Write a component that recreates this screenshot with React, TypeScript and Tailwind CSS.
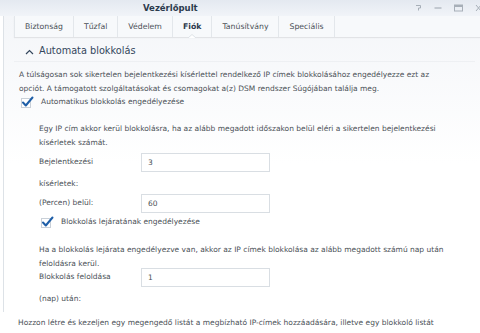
import React from 'react'

const tabs = ['Biztonság', 'Tűzfal', 'Védelem', 'Fiók', 'Tanúsítvány', 'Speciális']

function Check() {
  return (
    <svg width="13" height="12" viewBox="0 0 13 12" className="shrink-0">
      <rect x="0.5" y="2.5" width="9" height="9" fill="#fff" stroke="#c9d0d8" />
      <path d="M2 6.5 L4.8 9.5 L11.5 1.5" fill="none" stroke="#1f5fa8" strokeWidth="2" strokeLinecap="round" strokeLinejoin="round" />
    </svg>
  )
}

function Field({ lines, value }: { lines: string[]; value: string }) {
  return (
    <div className="flex">
      <div className="w-[102px] leading-[22px]">
        {lines.map((l) => (
          <div key={l}>{l}</div>
        ))}
      </div>
      <div className="w-[129px] h-[19px] mt-[2px] border border-[#d9dee3] bg-white flex items-center pl-[6px] text-[#4a4f55]">
        {value}
      </div>
    </div>
  )
}

export default function App() {
  return (
    <div
      className="w-[480px] h-[333px] overflow-hidden bg-white text-[7.5px] text-[#4b5157]"
      style={{ fontFamily: '"DejaVu Sans", Verdana, sans-serif' }}
    >
      {/* Title bar */}
      <div className="h-[16px] flex items-center bg-gradient-to-b from-[#e4e9f0] to-[#f1f4f8]">
        <div className="pl-[143px] font-bold text-[8.5px] text-[#2b3a4d]">Vezérlőpult</div>
        <div className="ml-auto flex items-center gap-[12px] text-[#9aa3ad]">
          <svg width="7" height="8" viewBox="0 0 7 8">
            <path d="M1 1.5 H5.5 V4 H3.5 V6.5" fill="none" stroke="#a7afb8" strokeWidth="1" />
          </svg>
          <svg width="8" height="8" viewBox="0 0 8 8">
            <path d="M0.5 4 H7.5" stroke="#a7afb8" strokeWidth="1.2" />
          </svg>
          <svg width="9" height="8" viewBox="0 0 9 8">
            <rect x="0.5" y="1" width="8" height="6" fill="none" stroke="#a7afb8" />
            <rect x="0.5" y="1" width="8" height="2" fill="#a7afb8" />
          </svg>
          <svg width="6" height="8" viewBox="0 0 6 8" className="-mr-[1px]">
            <path d="M1 1 L6 7 M6 1 L1 7" stroke="#a7afb8" strokeWidth="1" />
          </svg>
        </div>
      </div>

      {/* Window body */}
      <div className="ml-[3px] border-l border-[#dde2e7] h-[296px] bg-gradient-to-b from-[#f4f6f9] via-white to-white">
        {/* Tabs */}
        <div className="ml-[10px] h-[21px] flex border-l border-[#e3e7eb] shadow-[0_1px_1px_rgba(0,0,0,0.08)] bg-[#f7f9fb] text-[7.75px] text-[#4b5157]">
          {tabs.map((t) => (
            <div
              key={t}
              className={`relative flex items-center px-[10px] border-r border-[#e3e7eb] ${t === 'Fiók' ? 'font-bold text-[#2b3a4d]' : ''}`}
            >
              {t}
              {t === 'Fiók' && (
                <svg width="8" height="4" viewBox="0 0 8 4" className="absolute bottom-[-1px] left-1/2 -translate-x-1/2">
                  <path d="M0 4 L4 0.5 L8 4" fill="#fff" stroke="#dde2e7" strokeWidth="1" />
                </svg>
              )}
            </div>
          ))}
        </div>

        {/* Section header */}
        <div className="ml-[10px] mr-[5px] mt-[5px] h-[20px] flex items-center border-b border-[#eef0f3] text-[9.75px] text-[#34475d]">
          <svg width="9" height="6" viewBox="0 0 9 6" className="ml-[11px] mr-[5px]">
            <path d="M1 5 L4.5 1.5 L8 5" fill="none" stroke="#34475d" strokeWidth="1.2" />
          </svg>
          Automata blokkolás
        </div>

        <div className="pl-[15px] pr-[10px] leading-[14px]">
          <p className="mt-[6px]">
            A túlságosan sok sikertelen bejelentkezési kísérlettel rendelkező IP címek blokkolásához engedélyezze ezt az
            <br />
            opciót. A támogatott szolgáltatásokat és csomagokat a(z) DSM rendszer Súgójában találja meg.
          </p>
          <div className="h-[12px] flex items-center gap-[7px] pl-[2px]">
            <Check />
            <span>Automatikus blokkolás engedélyezése</span>
          </div>

          <div className="pl-[20px]">
            <p className="mt-[14px]">
              Egy IP cím akkor kerül blokkolásra, ha az alább megadott időszakon belül eléri a sikertelen bejelentkezési
              <br />
              kísérletek számát.
            </p>
            <div className="mt-[1px]">
              <Field lines={['Bejelentkezési', 'kísérletek:']} value="3" />
            </div>
            <div className="-mt-[3px]">
              <Field lines={['(Percen) belül:']} value="60" />
            </div>
            <div className="mt-[2px] h-[12px] flex items-center gap-[7px] pl-[2px]">
              <Check />
              <span>Blokkolás lejáratának engedélyezése</span>
            </div>
            <p className="mt-[15px]">
              Ha a blokkolás lejárata engedélyezve van, akkor az IP címek blokkolása az alább megadott számú nap után
              <br />
              feloldásra kerül.
            </p>
            <div className="-mt-[5px]">
              <Field lines={['Blokkolás feloldása', '(nap) után:']} value="1" />
            </div>
          </div>
        </div>
      </div>

      <p className="pl-[18px] mt-[4px] leading-[14px]">
        Hozzon létre és kezeljen egy megengedő listát a megbízható IP-címek hozzáadására, illetve egy blokkoló listát
      </p>
    </div>
  )
}
